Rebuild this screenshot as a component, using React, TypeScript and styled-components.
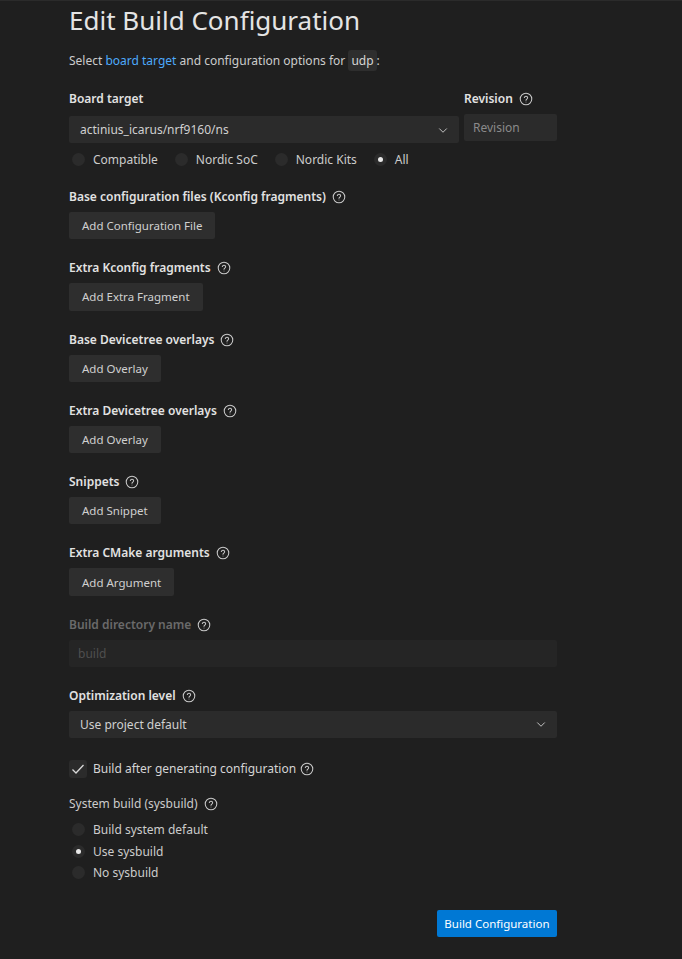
import React, { useState } from 'react';
import styled, { createGlobalStyle } from 'styled-components';

const GlobalStyle = createGlobalStyle`
  html, body {
    margin: 0;
    padding: 0;
    background: #1f1f1f;
  }
  body {
    font-family: "Noto Sans", "Open Sans", sans-serif;
    font-size: 12px;
    color: #cccccc;
    border-top: 1px solid #2b2b2b;
  }
`;

const Page = styled.div`
  width: 488px;
  padding: 0 0 20px 69px;
`;

const Title = styled.h1`
  margin: 0;
  padding-top: 1px;
  font-size: 26px;
  font-weight: 400;
  line-height: 36px;
  color: #e4e4e4;
`;

const Intro = styled.p`
  margin: 13px 0 0;
  line-height: 20px;
`;

const Link = styled.a`
  color: #4daafc;
  text-decoration: none;
`;

const Code = styled.code`
  font-family: inherit;
  background: #2e2e2e;
  border-radius: 3px;
  padding: 2px 3px;
  color: #d6d6d6;
`;

const Row = styled.div`
  display: flex;
  gap: 5px;
  margin-top: 19px;
`;

const Column = styled.div<{ $grow?: boolean; $width?: number }>`
  display: flex;
  flex-direction: column;
  flex: ${p => (p.$grow ? 1 : `0 0 ${p.$width}px`)};
`;

const Section = styled.div<{ $top?: number }>`
  margin-top: ${p => p.$top ?? 20}px;
`;

const Label = styled.div<{ $bold?: boolean; $disabled?: boolean }>`
  display: flex;
  align-items: center;
  gap: 6px;
  height: 18px;
  line-height: 18px;
  font-weight: ${p => (p.$bold ? 600 : 400)};
  color: ${p => (p.$disabled ? '#6a6a6a' : p.$bold ? '#e2e2e2' : '#cccccc')};
  margin-bottom: 6px;
`;

const SelectBox = styled.div<{ $offset?: number }>`
  display: flex;
  align-items: center;
  justify-content: space-between;
  height: 27px;
  margin-top: ${p => p.$offset ?? 0}px;
  padding: 0 10px 0 11px;
  background: #2b2b2b;
  border-radius: 2px;
  color: #d0d0d0;
`;

const TextInput = styled.div<{ $dim?: boolean }>`
  display: flex;
  align-items: center;
  height: 27px;
  padding: 0 9px;
  background: ${p => (p.$dim ? '#252525' : '#2b2b2b')};
  border-radius: 2px;
  color: ${p => (p.$dim ? '#4f4f4f' : '#8a8a8a')};
`;

const Button = styled.button<{ $primary?: boolean }>`
  height: ${p => (p.$primary ? 27 : 27.3)}px;
  padding: 0 ${p => (p.$primary ? 7.5 : 13)}px;
  border: none;
  border-radius: 2px;
  font-family: inherit;
  font-size: 11.5px;
  background: ${p => (p.$primary ? '#0078d4' : '#2e2e2e')};
  color: ${p => (p.$primary ? '#ffffff' : '#d0d0d0')};
  cursor: pointer;
`;

const RadioGroup = styled.div<{ $vertical?: boolean }>`
  display: flex;
  flex-direction: ${p => (p.$vertical ? 'column' : 'row')};
  gap: ${p => (p.$vertical ? '0' : '14px')};
  margin-top: ${p => (p.$vertical ? '0' : '7px')};
`;

const RadioItem = styled.label<{ $tall?: boolean }>`
  display: flex;
  align-items: center;
  gap: 8px;
  height: ${p => (p.$tall ? 21.5 : 18)}px;
  padding-left: 3px;
  color: #cccccc;
`;

const RadioDot = styled.span<{ $checked?: boolean }>`
  position: relative;
  width: 13px;
  height: 13px;
  border-radius: 50%;
  background: #2b2b2b;

  &::after {
    content: '';
    display: ${p => (p.$checked ? 'block' : 'none')};
    position: absolute;
    left: 4px;
    top: 4px;
    width: 5px;
    height: 5px;
    border-radius: 50%;
    background: #e8e8e8;
  }
`;

const CheckRow = styled.label`
  display: flex;
  align-items: center;
  gap: 4px;
  margin-top: 22px;
  color: #d4d4d4;
`;

const CheckBox = styled.span`
  display: flex;
  align-items: center;
  justify-content: center;
  width: 18px;
  height: 18px;
  border-radius: 3px;
  background: #2b2b2b;
  margin-right: 2px;
`;

const Footer = styled.div`
  display: flex;
  justify-content: flex-end;
  margin-top: 27px;
`;

const Help = () => (
  <svg width="14" height="14" viewBox="0 0 16 16" fill="none" stroke="#c8c8c8" strokeWidth="1.2">
    <circle cx="8" cy="8" r="6.6" />
    <path d="M6.1 6.3a1.95 1.95 0 0 1 3.8.4c0 1.3-1.9 1.6-1.9 2.8" strokeLinecap="round" />
    <circle cx="8" cy="11.4" r="0.55" fill="#c8c8c8" stroke="none" />
  </svg>
);

const Chevron = () => (
  <svg width="12" height="12" viewBox="0 0 16 16" fill="none" stroke="#c5c5c5" strokeWidth="1.3">
    <path d="M3 6l5 5 5-5" />
  </svg>
);

const Check = () => (
  <svg width="16" height="16" viewBox="0 0 16 16" fill="none" stroke="#d8d8d8" strokeWidth="1.3">
    <path d="M2.5 8.5l3.5 3.5 7.5-8" />
  </svg>
);

const Radio: React.FC<{ label: string; checked?: boolean; tall?: boolean }> = ({ label, checked, tall }) => (
  <RadioItem $tall={tall}>
    <RadioDot $checked={checked} />
    {label}
  </RadioItem>
);

const buttonSections = [
  { label: 'Base configuration files (Kconfig fragments)', button: 'Add Configuration File' },
  { label: 'Extra Kconfig fragments', button: 'Add Extra Fragment' },
  { label: 'Base Devicetree overlays', button: 'Add Overlay' },
  { label: 'Extra Devicetree overlays', button: 'Add Overlay' },
  { label: 'Snippets', button: 'Add Snippet' },
  { label: 'Extra CMake arguments', button: 'Add Argument' },
];

export default function App() {
  const [boardFilter] = useState('All');
  const [sysbuild] = useState('Use sysbuild');

  return (
    <>
      <GlobalStyle />
      <Page>
        <Title>Edit Build Configuration</Title>
        <Intro>
          Select <Link href="#">board target</Link> and configuration options for <Code>udp</Code>:
        </Intro>

        <Row>
          <Column $grow>
            <Label $bold>Board target</Label>
            <SelectBox $offset={2}>
              actinius_icarus/nrf9160/ns
              <Chevron />
            </SelectBox>
          </Column>
          <Column $width={93}>
            <Label $bold>
              Revision <Help />
            </Label>
            <TextInput>Revision</TextInput>
          </Column>
        </Row>
        <RadioGroup>
          {['Compatible', 'Nordic SoC', 'Nordic Kits', 'All'].map(o => (
            <Radio key={o} label={o} checked={o === boardFilter} />
          ))}
        </RadioGroup>

        {buttonSections.map((s, i) => (
          <Section key={s.label + i}>
            <Label $bold>
              {s.label} <Help />
            </Label>
            <Button>{s.button}</Button>
          </Section>
        ))}

        <Section>
          <Label $bold $disabled>
            Build directory name <Help />
          </Label>
          <TextInput $dim>build</TextInput>
        </Section>

        <Section>
          <Label $bold>
            Optimization level <Help />
          </Label>
          <SelectBox>
            Use project default
            <Chevron />
          </SelectBox>
        </Section>

        <CheckRow>
          <CheckBox>
            <Check />
          </CheckBox>
          Build after generating configuration <Help />
        </CheckRow>

        <Section $top={17}>
          <Label>
            System build (sysbuild) <Help />
          </Label>
          <RadioGroup $vertical>
            {['Build system default', 'Use sysbuild', 'No sysbuild'].map(o => (
              <Radio key={o} label={o} checked={o === sysbuild} tall />
            ))}
          </RadioGroup>
        </Section>

        <Footer>
          <Button $primary>Build Configuration</Button>
        </Footer>
      </Page>
    </>
  );
}
